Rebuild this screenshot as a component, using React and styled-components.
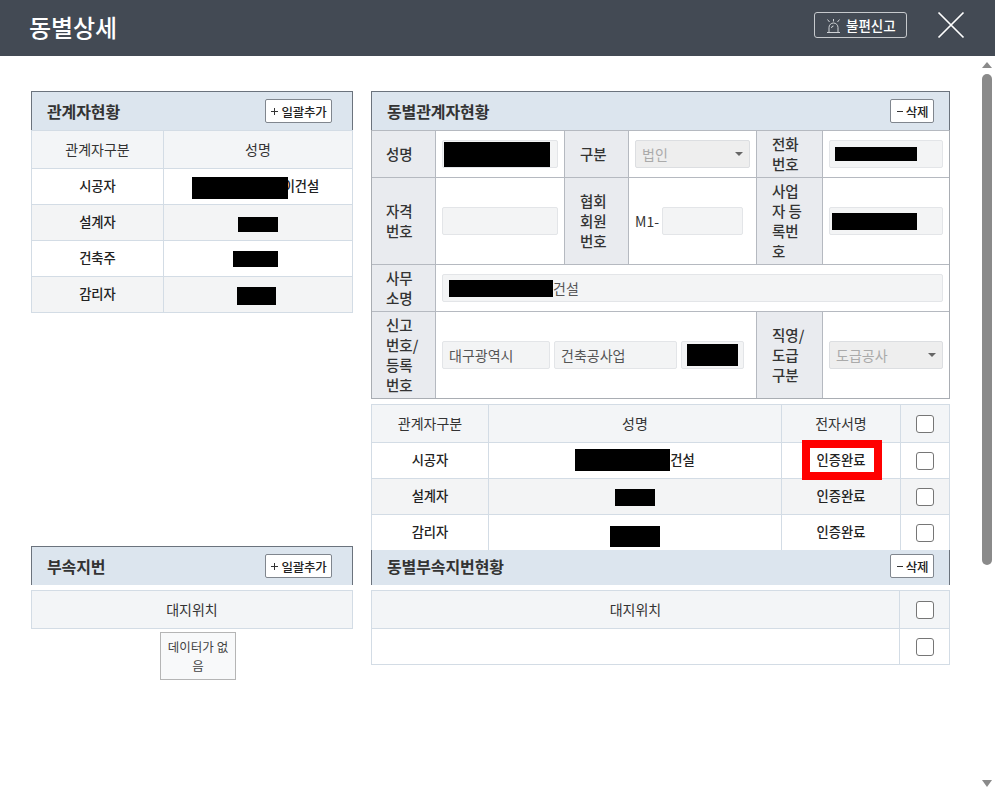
import React from 'react';
import styled, { createGlobalStyle } from 'styled-components';

const Global = createGlobalStyle`
  html, body { margin: 0; padding: 0; height: 100%; overflow: hidden; background: #fff; }
  body { font-family: "Noto Sans CJK KR", "Noto Sans", sans-serif; color: #222; }
  * { box-sizing: border-box; }
`;

const dots = `radial-gradient(rgba(255,255,255,.55) .5px, transparent .7px)`;

const Page = styled.div`
  width: 995px; height: 789px; display: flex; flex-direction: column; overflow: hidden;
`;
const TopBar = styled.header`
  height: 56px; flex: none; background: #434a54; display: flex; align-items: center;
  padding: 0 30px 6px 29px;
`;
const PageTitle = styled.h1`
  margin: 3px 0 0; font-size: 24px; line-height: 30px; font-weight: 500; color: #fff; letter-spacing: -.1px; flex: 1;
`;
const ReportButton = styled.button`
  width: 93px; height: 26px; padding: 0 0 0 11px; background: transparent; border: 1px solid #c6c9cd; border-radius: 3px;
  display: flex; align-items: center; gap: 5px; color: #fff; font: 500 13.5px "Noto Sans CJK KR", sans-serif;
  margin-right: 30px;
`;
const CloseButton = styled.button`
  width: 28px; height: 28px; padding: 0; background: none; border: 0; display: block;
`;

const Body = styled.div`
  flex: 1; display: flex; min-height: 0;
`;
const Content = styled.main`
  flex: 1; padding: 35px 0 0 31px; display: grid; grid-template-columns: 322px 579px; column-gap: 18px; align-content: start;
`;
const Column = styled.div`
  display: flex; flex-direction: column;
`;
const Section = styled.section`
  height: ${p => p.$height ? p.$height + 'px' : 'auto'};
`;

const SectionHead = styled.div`
  height: ${p => p.$clipped ? 35 : 39}px; background: #dce5ee; display: flex; align-items: center; justify-content: space-between;
  border-left: 1px solid #6b737d; border-right: 1px solid #6b737d;
  border-top: ${p => p.$clipped ? '0' : '1px solid #6b737d'};
  padding: ${p => p.$clipped ? '0 16px 3px 15px' : '0 20px 0 15px'};
  padding-right: ${p => p.$right ? 15 : 20}px;
`;
const SectionTitle = styled.h2`
  margin: 0; font-size: 16px; line-height: 22px; font-weight: 700; color: #333; letter-spacing: -.1px;
`;
const SmallButton = styled.button`
  height: 24px; width: ${p => p.$w}px; padding: 0; background: #fff; border: 1px solid #80868e; border-radius: 2px;
  display: flex; align-items: center; justify-content: center; gap: 2px;
  color: #222; font: 500 12.5px "Noto Sans CJK KR", sans-serif; letter-spacing: -.2px;
`;

const Table = styled.table`
  width: 100%; border-collapse: collapse; table-layout: fixed; line-height: 20px;
  margin-top: ${p => p.$gap ? p.$gap : 0}px;
`;
const Th = styled.th`
  height: 38px; padding: 0 0 2px; font-size: 14px; font-weight: 400; color: #333; text-align: center; background-color: #f3f5f7;
  background-image: ${dots}; background-size: 4px 4px;
  border: 1px solid #d3dce5;
`;
const Td = styled.td`
  height: 36px; padding: 0 0 1px; text-align: center; font-size: 13.3px; font-weight: 500; color: #222;
  background-color: ${p => p.$alt ? '#f3f4f5' : '#fff'};
  background-image: ${p => p.$alt ? dots : 'none'}; background-size: 4px 4px;
  border: 1px solid #d3dce5;
`;
const CellFlow = styled.span`
  display: inline-flex; align-items: center; justify-content: center; vertical-align: middle;
`;
const Redact = styled.span`
  display: inline-block; background: #000; width: ${p => p.$w}px; height: ${p => p.$h}px; flex: none; position: relative; z-index: 1;
  margin-left: ${p => p.$ml || 0}px; margin-top: ${p => p.$mt || 0}px;
`;
const Suffix = styled.span`
  margin-left: ${p => p.$overlap || 0}px; margin-right: ${p => p.$trail || 0}px;
`;
const Check = styled.span`
  display: inline-block; width: 18px; height: 18px; background: #fff; border: 1px solid #767676; border-radius: 3px; vertical-align: middle;
`;
const SignWrap = styled.span`
  position: relative; display: inline-block;
`;
const RedBox = styled.span`
  position: absolute; left: -15px; top: -10px; width: 80px; height: 40px; border: 8px solid #f00; pointer-events: none;
`;

const Form = styled.div`
  display: grid; grid-template-columns: 64px 128px 65px 127px 67px 126px;
  grid-template-rows: 47px 87px 47px 87px;
  border-left: 1px solid #a9adb3; border-right: 1px solid #a9adb3; border-bottom: 1px solid #a9adb3;
  font-size: 14px;
`;
const Label = styled.div`
  background: #e9ebef; border-right: 1px solid #b5b9c0; border-top: 1px solid #b5b9c0; border-left: ${p => p.$inner ? '1px solid #b5b9c0' : '0'};
  display: flex; align-items: center; padding: 0 ${p => p.$inner ? 15 : 14}px; font-size: 14.5px; font-weight: 500; color: #333; line-height: 20px;
  word-break: break-all;
`;
const Field = styled.div`
  border-top: 1px solid #b5b9c0; display: flex; align-items: center; gap: ${p => p.$gap || 4}px; padding: 0 6px;
  grid-column: ${p => p.$span ? `span ${p.$span}` : 'auto'};
  background: #fff;
`;
const Input = styled.div`
  height: 28px; flex: ${p => p.$w ? `0 0 ${p.$w}px` : '1'}; border: 1px solid #e3e5e8; border-radius: 2px; background-color: #f3f4f5;
  background-image: ${dots}; background-size: 4px 4px;
  display: flex; align-items: center; padding: 0 ${p => p.$pad ?? 6}px; color: #555; white-space: nowrap; position: relative;
`;
const SelectBox = styled.div`
  height: 28px; flex: 1; border: 1px solid #dcdee1; border-radius: 2px; background: #eeeeee; display: flex; align-items: center;
  justify-content: space-between; padding: 0 6px; color: #aaa;
`;
const Caret = styled.span`
  width: 0; height: 0; border-left: 4px solid transparent; border-right: 4px solid transparent; border-top: 4px solid #666;
`;
const Prefix = styled.span`
  color: #333; font-size: 14px; letter-spacing: .1px;
`;
const Empty = styled.div`
  width: 76px; height: 48px; margin: 3px 0 0 129px; border: 1px solid #b5b5b5; background: #f8f9fa;
  display: flex; align-items: center; justify-content: center; text-align: center; font-size: 12.5px; line-height: 19px; color: #444; padding: 0 4px;
`;

const Rail = styled.aside`
  width: 12px; margin-right: 2px; flex: none; display: flex; flex-direction: column; align-items: center; padding-top: 6px; height: 100%;
`;
const RailUp = styled.span`
  width: 0; height: 0; border-left: 5px solid transparent; border-right: 5px solid transparent; border-bottom: 6px solid #8a8a8a;
`;
const RailDown = styled.span`
  width: 0; height: 0; border-left: 5px solid transparent; border-right: 5px solid transparent; border-top: 7px solid #8a8a8a; margin-top: auto; margin-bottom: 2px;
`;
const Thumb = styled.span`
  display: block; width: 10px; height: 491px; background: #8a8a8a; border-radius: 5px; margin-top: 6px;
`;

const BellIcon = () => (
  <svg width="15" height="15" viewBox="0 0 15 15" fill="none" stroke="#cfd2d6" strokeWidth="1">
    <path d="M3 14V9.5a4.5 4.5 0 0 1 9 0V14" />
    <path d="M1 14.5h13" />
    <path d="M5.5 10a2 2 0 0 1 2-2" />
    <path d="M7.5 1v2.5M1.5 1.5l2 2.5M13.5 1.5l-2 2.5" />
  </svg>
);
const CloseIcon = () => (
  <svg width="28" height="28" viewBox="0 0 28 28" fill="none" stroke="#fff" strokeWidth="1.7">
    <path d="M1.5 1.5l25 25M26.5 1.5l-25 25" />
  </svg>
);
const PlusIcon = () => (
  <svg width="9" height="9" viewBox="0 0 9 9" stroke="#333" strokeWidth="1"><path d="M4.5 1v7M1 4.5h7" /></svg>
);
const MinusIcon = () => (
  <svg width="8" height="9" viewBox="0 0 8 9" stroke="#333" strokeWidth="1"><path d="M1 4.5h6" /></svg>
);

const AddButton = () => <SmallButton type="button" $w={67}><PlusIcon />일괄추가</SmallButton>;
const RemoveButton = () => <SmallButton type="button" $w={44}><MinusIcon />삭제</SmallButton>;

const people = [
  { role: '시공자', w: 96, h: 22, suffix: '이건설', overlap: -5, trail: 5, ml: 0, mt: 4 },
  { role: '설계자', w: 40, h: 15, mt: 2 },
  { role: '건축주', w: 45, h: 16, ml: -5 },
  { role: '감리자', w: 39, h: 18, ml: -4, mt: 4 },
];
const signers = [
  { role: '시공자', w: 95, h: 22, suffix: '건설', red: true },
  { role: '설계자', w: 40, h: 17, ml: -1 },
  { role: '감리자', w: 50, h: 21, mt: 8 },
];

export default function App() {
  return (
    <Page>
      <Global />
      <TopBar>
        <PageTitle>동별상세</PageTitle>
        <ReportButton type="button"><BellIcon />불편신고</ReportButton>
        <CloseButton type="button" aria-label="닫기"><CloseIcon /></CloseButton>
      </TopBar>
      <Body>
        <Content>
          <Column>
            <Section $height={455}>
              <SectionHead>
                <SectionTitle>관계자현황</SectionTitle>
                <AddButton />
              </SectionHead>
              <Table>
                <colgroup><col style={{ width: 132 }} /><col /></colgroup>
                <thead><tr><Th>관계자구분</Th><Th>성명</Th></tr></thead>
                <tbody>
                  {people.map((p, i) => (
                    <tr key={p.role}>
                      <Td $alt={i % 2 === 1}>{p.role}</Td>
                      <Td $alt={i % 2 === 1}>
                        <CellFlow>
                          <Redact $w={p.w} $h={p.h} $ml={p.ml} $mt={p.mt} />
                          {p.suffix && <Suffix $overlap={p.overlap} $trail={p.trail}>{p.suffix}</Suffix>}
                        </CellFlow>
                      </Td>
                    </tr>
                  ))}
                </tbody>
              </Table>
            </Section>
            <Section>
              <SectionHead>
                <SectionTitle>부속지번</SectionTitle>
                <AddButton />
              </SectionHead>
              <Table $gap={5}>
                <thead><tr><Th>대지위치</Th></tr></thead>
              </Table>
              <Empty>데이터가 없음</Empty>
            </Section>
          </Column>
          <Column>
            <Section $height={459}>
              <SectionHead $right>
                <SectionTitle>동별관계자현황</SectionTitle>
                <RemoveButton />
              </SectionHead>
              <Form>
                <Label>성명</Label>
                <Field><Input $pad={1}><Redact $w={106} $h={25} /></Input></Field>
                <Label $inner>구분</Label>
                <Field><SelectBox>법인<Caret /></SelectBox></Field>
                <Label $inner>전화번호</Label>
                <Field><Input $pad={5}><Redact $w={82} $h={14} /></Input></Field>

                <Label>자격번호</Label>
                <Field><Input /></Field>
                <Label $inner>협회회원번호</Label>
                <Field $gap={3}><Prefix>M1-</Prefix><Input $w={81} /></Field>
                <Label $inner>사업자 등록번호</Label>
                <Field><Input $pad={2}><Redact $w={85} $h={17} /></Input></Field>

                <Label>사무소명</Label>
                <Field $span={5}><Input><Redact $w={104} $h={17} />건설</Input></Field>

                <Label>신고번호/등록번호</Label>
                <Field $span={3}>
                  <Input $w={108}>대구광역시</Input>
                  <Input $w={123}>건축공사업</Input>
                  <Input $w={62} $pad={5}><Redact $w={51} $h={22} /></Input>
                </Field>
                <Label $inner>직영/도급구분</Label>
                <Field><SelectBox>도급공사<Caret /></SelectBox></Field>
              </Form>
              <Table $gap={5}>
                <colgroup><col style={{ width: 117 }} /><col style={{ width: 293 }} /><col style={{ width: 119 }} /><col /></colgroup>
                <thead>
                  <tr><Th>관계자구분</Th><Th>성명</Th><Th>전자서명</Th><Th><Check /></Th></tr>
                </thead>
                <tbody>
                  {signers.map((p, i) => (
                    <tr key={p.role}>
                      <Td $alt={i === 1}>{p.role}</Td>
                      <Td $alt={i === 1}><CellFlow><Redact $w={p.w} $h={p.h} $ml={p.ml} $mt={p.mt} />{p.suffix}</CellFlow></Td>
                      <Td $alt={i === 1}><SignWrap>인증완료{p.red && <RedBox />}</SignWrap></Td>
                      <Td $alt={i === 1}><Check /></Td>
                    </tr>
                  ))}
                </tbody>
              </Table>
            </Section>
            <Section>
              <SectionHead $clipped $right>
                <SectionTitle>동별부속지번현황</SectionTitle>
                <RemoveButton />
              </SectionHead>
              <Table $gap={5}>
                <colgroup><col /><col style={{ width: 50 }} /></colgroup>
                <thead><tr><Th>대지위치</Th><Th><Check /></Th></tr></thead>
                <tbody><tr><Td /><Td><Check /></Td></tr></tbody>
              </Table>
            </Section>
          </Column>
        </Content>
        <Rail>
          <RailUp />
          <Thumb />
          <RailDown />
        </Rail>
      </Body>
    </Page>
  );
}
